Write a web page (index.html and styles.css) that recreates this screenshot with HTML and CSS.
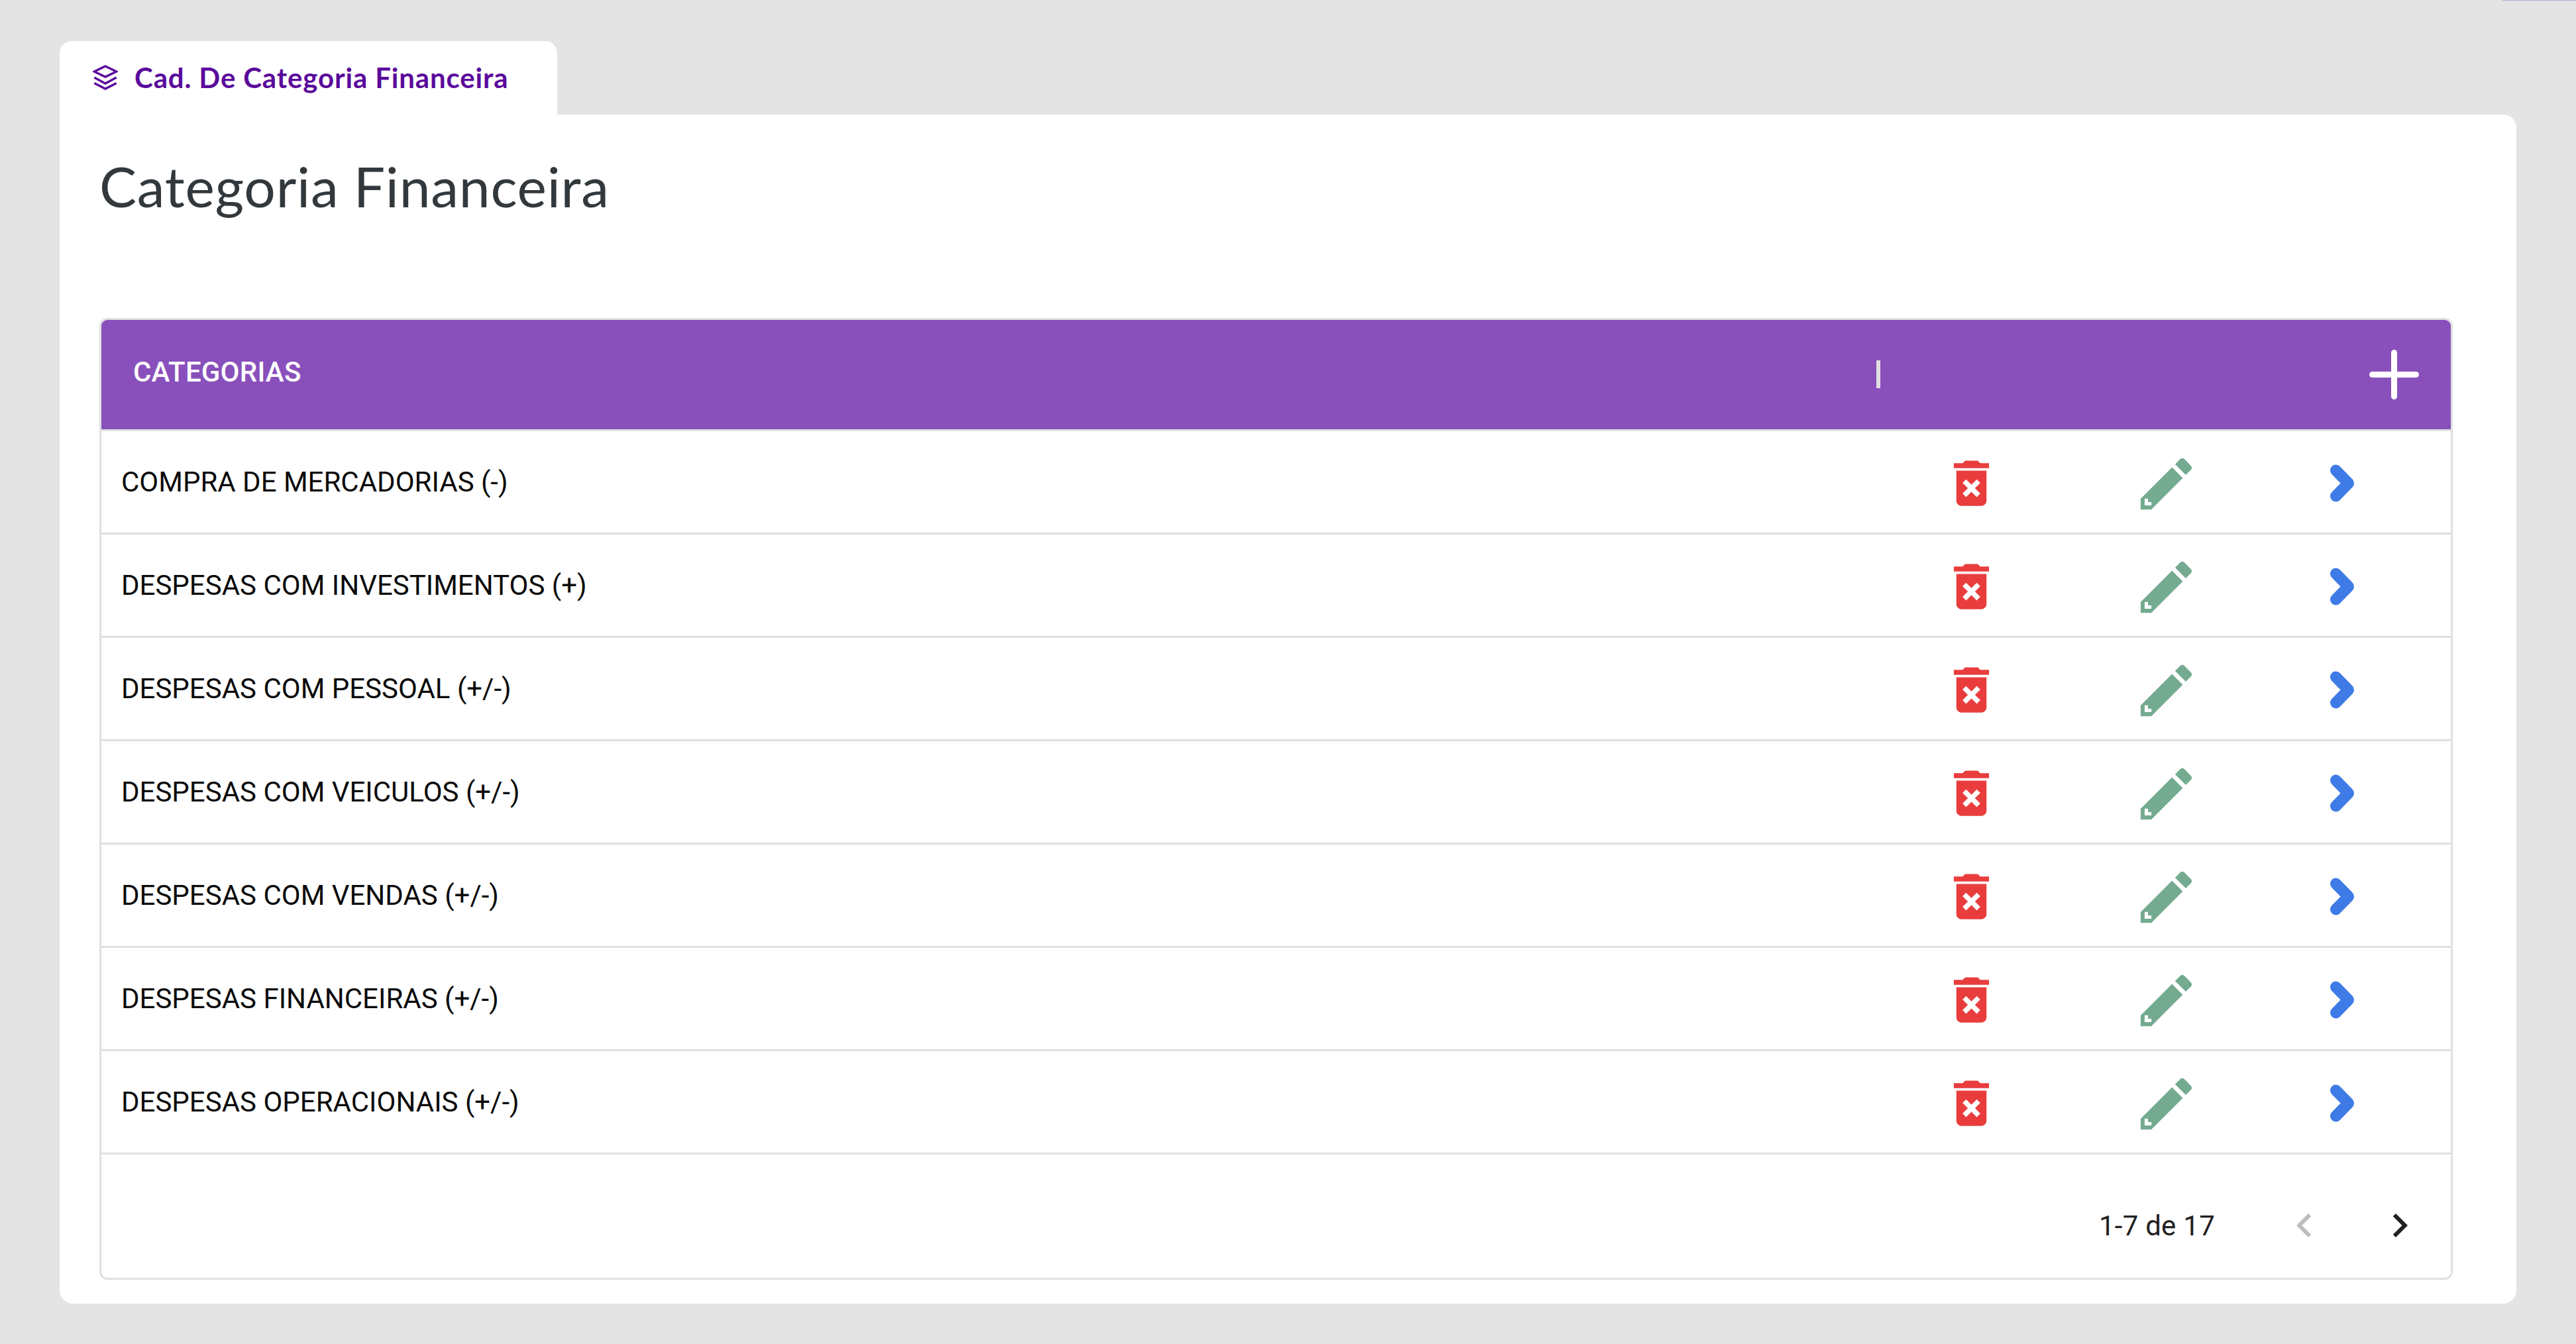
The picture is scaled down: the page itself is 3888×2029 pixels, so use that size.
FILE: index.html
```html
<!DOCTYPE html>
<html lang="pt">
<head>
<meta charset="utf-8">
<title>Categoria Financeira</title>
<link rel="stylesheet" href="styles.css">
</head>
<body>
<svg class="defs" width="0" height="0" aria-hidden="true">
  <symbol id="i-trash" viewBox="0 0 24 24"><path d="M6 19c0 1.1.9 2 2 2h8c1.1 0 2-.9 2-2V7H6v12zm2.46-7.12l1.41-1.41L12 12.59l2.12-2.12 1.41 1.41L13.41 14l2.12 2.12-1.41 1.41L12 15.41l-2.12 2.12-1.41-1.41L10.59 14l-2.13-2.12zM15.5 4l-1-1h-5l-1 1H5v2h14V4z"/></symbol>
  <symbol id="i-edit" viewBox="0 0 24 24"><path fill-rule="evenodd" d="M3 17.25V21h3.75L17.81 9.94l-3.75-3.75L3 17.25zM4.400 17.200v2.400h2.400v-1.200H5.600v-1.200zM20.71 7.04c.39-.39.39-1.02 0-1.41l-2.34-2.34c-.39-.39-1.02-.39-1.41 0l-1.83 1.83 3.75 3.750 1.83-1.830z"/></symbol>
  <symbol id="i-go" viewBox="0 0 42 67"><path d="M11.500 14 30.500 33.500 11.500 53"/></symbol>
</svg>
<div class="top-strip"></div>
<main class="page">
  <nav class="tabs">
    <div class="tab">
      <svg class="tab-icon" viewBox="0 0 38 38"><path d="M19 2 35.700 10 19 18 2.300 10z"/><path d="M2.300 19 19 28 35.700 19"/><path d="M2.300 27.500 19 36 35.700 27.500"/></svg>
      <span class="tab-label">Cad. De Categoria Financeira</span>
    </div>
  </nav>
  <section class="card">
    <h1 class="title">Categoria Financeira</h1>
    <div class="table">
      <header class="thead">
        <span class="thead-label">CATEGORIAS</span>
        <span class="thead-sep"></span>
        <svg class="add" viewBox="0 0 75 75"><path d="M37.500 4.500v66M4.500 37.500h66"/></svg>
      </header>
      <div class="row"><span class="row-label">COMPRA DE MERCADORIAS (-)</span><span class="cell"><svg class="i-trash"><use href="#i-trash"/></svg></span><span class="cell"><svg class="i-edit"><use href="#i-edit"/></svg></span><span class="cell cell-go"><svg class="i-go"><use href="#i-go"/></svg></span></div>
      <div class="row"><span class="row-label">DESPESAS COM INVESTIMENTOS (+)</span><span class="cell"><svg class="i-trash"><use href="#i-trash"/></svg></span><span class="cell"><svg class="i-edit"><use href="#i-edit"/></svg></span><span class="cell cell-go"><svg class="i-go"><use href="#i-go"/></svg></span></div>
      <div class="row"><span class="row-label">DESPESAS COM PESSOAL (+/-)</span><span class="cell"><svg class="i-trash"><use href="#i-trash"/></svg></span><span class="cell"><svg class="i-edit"><use href="#i-edit"/></svg></span><span class="cell cell-go"><svg class="i-go"><use href="#i-go"/></svg></span></div>
      <div class="row"><span class="row-label">DESPESAS COM VEICULOS (+/-)</span><span class="cell"><svg class="i-trash"><use href="#i-trash"/></svg></span><span class="cell"><svg class="i-edit"><use href="#i-edit"/></svg></span><span class="cell cell-go"><svg class="i-go"><use href="#i-go"/></svg></span></div>
      <div class="row"><span class="row-label">DESPESAS COM VENDAS (+/-)</span><span class="cell"><svg class="i-trash"><use href="#i-trash"/></svg></span><span class="cell"><svg class="i-edit"><use href="#i-edit"/></svg></span><span class="cell cell-go"><svg class="i-go"><use href="#i-go"/></svg></span></div>
      <div class="row"><span class="row-label">DESPESAS FINANCEIRAS (+/-)</span><span class="cell"><svg class="i-trash"><use href="#i-trash"/></svg></span><span class="cell"><svg class="i-edit"><use href="#i-edit"/></svg></span><span class="cell cell-go"><svg class="i-go"><use href="#i-go"/></svg></span></div>
      <div class="row"><span class="row-label">DESPESAS OPERACIONAIS (+/-)</span><span class="cell"><svg class="i-trash"><use href="#i-trash"/></svg></span><span class="cell"><svg class="i-edit"><use href="#i-edit"/></svg></span><span class="cell cell-go"><svg class="i-go"><use href="#i-go"/></svg></span></div>
      <footer class="pager">
        <span class="pager-text">1-7 de 17</span>
        <svg class="pager-btn pager-off" viewBox="0 0 24 24"><path d="M15.410 7.410 14 6l-6 6 6 6 1.410-1.410L10.830 12z"/></svg>
        <svg class="pager-btn pager-on" viewBox="0 0 24 24"><path d="M10 6 8.590 7.410 13.170 12l-4.580 4.590L10 18l6-6z"/></svg>
      </footer>
    </div>
  </section>
</main>
</body>
</html>
```
FILE: styles.css
```css
* { box-sizing: border-box; }
html, body { margin: 0; padding: 0; }
body {
  width: 3888px;
  height: 2029px;
  background: #e4e4e4;
  overflow: hidden;
  font-family: "Roboto", sans-serif;
  position: relative;
}
.defs { position: absolute; }
.top-strip {
  position: absolute;
  top: 0;
  right: 0;
  width: 111px;
  height: 1px;
  background: #c4a8dc;
}
.page {
  display: flex;
  flex-direction: column;
  padding: 62px 90px 61px;
  height: 100%;
}
.tabs { display: flex; }
.tab {
  display: flex;
  align-items: center;
  width: 751px;
  height: 111px;
  padding: 0 0 1px 50px;
  background: #fff;
  border-radius: 18px 18px 0 0;
  box-shadow: 0 -1px 1px #dde3e8;
}
.tab-icon {
  width: 38px;
  height: 38px;
  fill: none;
  stroke: #5b0a9b;
  stroke-width: 3.4;
  stroke-linejoin: miter;
}
.tab-label {
  margin-left: 25px;
  font-family: "Lato", sans-serif;
  font-weight: 700;
  font-size: 42px;
  line-height: 50px;
  letter-spacing: 0.85px;
  color: #5b0a9b;
}
.card {
  flex: 1;
  display: flex;
  flex-direction: column;
  background: #fff;
  border-radius: 0 20px 20px 20px;
  padding: 54px 96px 36px 60px;
}
.title {
  margin: 0 0 145px;
  height: 108px;
  font-family: "Lato", sans-serif;
  font-weight: 400;
  font-size: 84px;
  line-height: 108px;
  letter-spacing: 0.75px;
  color: #32383b;
}
.table {
  flex: 1;
  display: flex;
  flex-direction: column;
  border: 3px solid #e0e0e0;
  border-radius: 12px;
  overflow: hidden;
}
.thead {
  display: flex;
  align-items: center;
  flex: none;
  height: 165px;
  background: #8950bc;
  color: #fff;
  padding: 0 48px;
}
.thead-label {
  flex: none;
  width: 2631px;
  margin-bottom: 8px;
  font-size: 42px;
  font-weight: 500;
  letter-spacing: 0.2px;
}
.thead-sep {
  flex: none;
  width: 6px;
  height: 42px;
  margin-bottom: 2px;
  background: #e0e0e0;
}
.add {
  flex: none;
  width: 75px;
  height: 75px;
  margin-left: auto;
  fill: none;
  stroke: #fff;
  stroke-width: 9;
  stroke-linecap: round;
}
.row {
  display: flex;
  align-items: center;
  flex: none;
  height: 156px;
  border-top: 3px solid #e0e0e0;
  padding-right: 46px;
}
.row-label {
  flex: 1;
  padding-left: 30px;
  font-size: 42px;
  color: #0a0a0a;
}
.cell {
  flex: none;
  width: 294px;
  padding-top: 3px;
  display: flex;
  justify-content: center;
  align-items: center;
}
.cell-go { width: 237px; }
.i-trash { width: 91px; height: 91px; fill: #e93d3d; }
.i-edit { width: 103px; height: 103px; margin-top: 3px; fill: #74ab90; }
.i-go {
  width: 42px;
  height: 67px;
  fill: none;
  stroke: #3e7be6;
  stroke-width: 17;
  stroke-linecap: round;
  stroke-linejoin: round;
}
.pager {
  flex: 1;
  display: flex;
  align-items: center;
  justify-content: flex-end;
  border-top: 3px solid #e0e0e0;
  padding: 28px 41px 0 0;
}
.pager-text {
  font-size: 42px;
  letter-spacing: 0.25px;
  color: #212121;
  margin-right: 99px;
}
.pager-btn { width: 72px; height: 72px; }
.pager-off { fill: #bdbdbd; margin-right: 72px; }
.pager-on { fill: #212121; }
```
